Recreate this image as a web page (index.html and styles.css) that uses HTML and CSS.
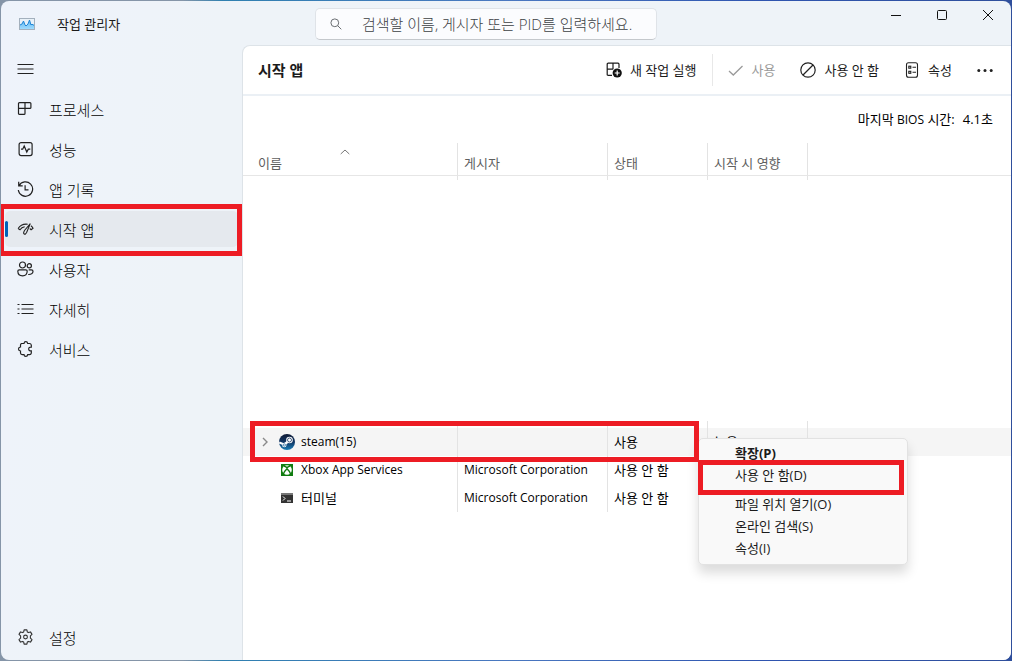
FILE: index.html
```html
<!DOCTYPE html>
<html lang="ko">
<head>
<meta charset="utf-8">
<title>작업 관리자</title>
<link rel="stylesheet" href="styles.css">
</head>
<body>
<div class="window">
  <header class="titlebar">
    <div class="brand">
      <svg class="app-icon" width="16" height="12" viewBox="0 0 16 12"><defs><linearGradient id="g1" x1="0" y1="0" x2="0" y2="1"><stop offset="0" stop-color="#5db4ee"/><stop offset="1" stop-color="#9fdcff"/></linearGradient></defs><rect x=".5" y=".5" width="15" height="11" fill="#e8f1f8" stroke="#a3b0bd"/><path d="M1 11V7l2-1 1.500-3L6 7l1 1 2-2 1.500-4L12 7l1-1 1 1h1v4z" fill="url(#g1)"/><path d="M1 7l2-1 1.500-3L6 7l1 1 2-2 1.500-4L12 7l1-1 1 1h1" fill="none" stroke="#1f86d6"/></svg>
      <h1 class="app-title">작업 관리자</h1>
    </div>
    <label class="search">
      <svg width="12" height="12" viewBox="0 0 12 12" fill="none" stroke="#6b6f73"><circle cx="4.800" cy="4.800" r="3.900"/><path d="M7.600 7.600l3.700 3.700"/></svg>
      <input type="text" aria-label="검색" placeholder="검색할 이름, 게시자 또는 PID를 입력하세요.">
    </label>
    <div class="caption">
      <button type="button" aria-label="최소화"><svg width="12" height="12" viewBox="0 0 12 12" stroke="#111"><path d="M1 6.500h10"/></svg></button>
      <button type="button" aria-label="최대화"><svg width="12" height="12" viewBox="0 0 12 12" fill="none" stroke="#111"><rect x="1.500" y="1.500" width="9" height="9" rx="1"/></svg></button>
      <button type="button" aria-label="닫기"><svg width="12" height="12" viewBox="0 0 12 12" stroke="#111"><path d="M1 1l10 10M11 1L1 11"/></svg></button>
    </div>
  </header>
  <div class="workspace">
    <nav class="sidebar">
      <button type="button" class="nav-item" aria-label="메뉴"><svg width="16" height="16" viewBox="0 0 16 16" stroke="#222"><path d="M0 3.500h16M0 8h16M0 12.500h16"/></svg></button>
      <button type="button" class="nav-item"><svg width="16" height="16" viewBox="0 0 16 16" fill="none" stroke="#222" stroke-width="1.200"><path d="M2 1.600h10.400q1 0 1 1v3.800q0 1-1 1H7.500v5q0 1-1 1H2q-1 0-1-1V2.600q0-1 1-1zM7.500 1.600v5.800H1"/></svg><span>프로세스</span></button>
      <button type="button" class="nav-item"><svg width="16" height="16" viewBox="0 0 16 16" fill="none" stroke="#222" stroke-width="1.200"><rect x="1.600" y="1.600" width="13" height="13" rx="2"/><path d="M3.500 8.200h1.700L6.700 5l2.600 6 1.500-2.800h2"/></svg><span>성능</span></button>
      <button type="button" class="nav-item"><svg width="16" height="16" viewBox="0 0 16 16" fill="none" stroke="#222" stroke-width="1.200"><path d="M1.200.8v4h4M1.600 4.600A7.200 7.200 0 1 1 .8 9M7.600 4.300v4.500h3.400"/></svg><span>앱 기록</span></button>
      <button type="button" class="nav-item selected" aria-current="page"><svg width="16" height="16" viewBox="0 0 16 16" fill="none" stroke="#222" stroke-width="1.100"><path d="M.6 7.500Q3.800 2.400 10.200 3.200M.6 7.500l1.900 1.300q1.600-2.500 4.700-3M13.400 4.700q1.400.9 2.100 2.600l-1.900 1.500-1.300-1.300M12.800 2.600L7 9.500q-1.600 2.800-.3 3.500t2.500-1.700z"/></svg><span>시작 앱</span></button>
      <button type="button" class="nav-item"><svg width="17" height="16" viewBox="0 0 17 16" fill="none" stroke="#222" stroke-width="1.200"><circle cx="5.500" cy="4" r="3"/><circle cx="12.300" cy="4.800" r="2.100"/><path d="M2.300 8.800h6.500q1.400 0 1.400 1.300 0 4.700-4.600 4.700T.8 10.200q0-1.400 1.500-1.400zM11.700 8.800h2.700q1.600 0 1.600 1.500-.2 3.400-4.800 3.200"/></svg><span>사용자</span></button>
      <button type="button" class="nav-item"><svg width="16" height="16" viewBox="0 0 16 16" stroke="#222" stroke-width="1.200"><path d="M0 3.500h2M0 8h2M0 12.500h2M4 3.500h12M4 8h12M4 12.500h12"/></svg><span>자세히</span></button>
      <button type="button" class="nav-item"><svg width="16" height="16" viewBox="0 0 16 16" fill="none" stroke="#222" stroke-width="1.200"><path d="M4 2.500h2.500Q6.700.6 8.300.6t1.900 1.900H12q1.500 0 1.800 1.500v2.200Q11.200 6 11.200 8t2.600 1.900v2.200q-.3 1.500-1.800 1.500h-1.800q-.2 1.800-1.900 1.800t-1.800-1.800H4.600Q3.100 13.500 3 12v-2Q1 9.700 1 8t2-2V4q0-1 1-1.500z"/></svg><span>서비스</span></button>
      <button type="button" class="nav-item settings"><svg width="16" height="16" viewBox="0 0 16 16" fill="none" stroke="#333" stroke-width="1.100"><path d="M6.600.9h2.800l.4 2 1.200.7 2-.7 1.500 2.500-1.600 1.400v2.400l1.600 1.400-1.500 2.500-2-.7-1.200.7-.4 2H6.600l-.4-2-1.200-.7-2 .7-1.500-2.500 1.600-1.400V6.800L1.500 5.400 3 2.900l2 .7 1.200-.7z" stroke-linejoin="round"/><circle cx="8" cy="8" r="1.900"/></svg><span>설정</span></button>
    </nav>
    <main class="panel">
      <div class="toolbar">
        <h2>시작 앱</h2>
        <button type="button"><svg width="16" height="16" viewBox="0 0 16 16" fill="none" stroke="#1b1b1b" stroke-width="1.200"><path d="M6 13.400H2.200q-1 0-1-1V2.200q0-1 1-1H12q1 0 1 1V6M7 1.200v6M1.200 7.200H7"/><circle cx="11.200" cy="11" r="4.600" fill="#111" stroke="none"/><path d="M11.200 8.500v5M8.700 11h5" stroke="#fff"/></svg>새 작업 실행</button>
        <span class="separator"></span>
        <button type="button" disabled><svg width="16" height="16" viewBox="0 0 16 16" fill="none" stroke="#9a9a9a" stroke-width="1.300"><path d="M1 9l4.300 4L14.500 4"/></svg>사용</button>
        <button type="button"><svg width="16" height="16" viewBox="0 0 16 16" fill="none" stroke="#222" stroke-width="1.200"><circle cx="8" cy="8" r="7.200"/><path d="M3 13L13 3"/></svg>사용 안 함</button>
        <button type="button"><svg width="16" height="16" viewBox="0 0 16 16" fill="none" stroke="#222" stroke-width="1.100"><rect x="2.500" y=".8" width="11" height="14.400" rx="2"/><rect x="4.800" y="4.200" width="2" height="2"/><rect x="4.800" y="9.300" width="2" height="2"/><path d="M8.500 5.200H12M8.500 10.300H12"/></svg>속성</button>
        <button type="button" aria-label="더 보기"><svg width="16" height="16" viewBox="0 0 16 16" fill="#222"><circle cx="1.800" cy="8.500" r="1.500"/><circle cx="8" cy="8.500" r="1.500"/><circle cx="14.200" cy="8.500" r="1.500"/></svg></button>
      </div>
      <p class="bios"><span>마지막 <span class="latin">BIOS</span> 시간:</span><span>4.1초</span></p>
      <table class="apps">
        <colgroup><col class="c-name"><col class="c-publisher"><col class="c-status"><col class="c-impact"><col></colgroup>
        <thead>
          <tr>
            <th scope="col">이름<svg class="sort" width="10" height="6" viewBox="0 0 10 6" fill="none" stroke="#777"><path d="M.7 5L5 1l4.300 4"/></svg></th>
            <th scope="col">게시자</th><th scope="col">상태</th><th scope="col">시작 시 영향</th><td></td>
          </tr>
        </thead>
        <tbody>
          <tr class="blank"><td></td><td></td><td></td><td></td><td></td></tr>
          <tr class="active">
            <td><div class="app"><svg class="chevron" width="6" height="10" viewBox="0 0 6 10" fill="none" stroke="#8a8a8a" stroke-width="1.400"><path d="M1 1l4 4-4 4"/></svg><svg width="16" height="16" viewBox="0 0 16 16"><defs><linearGradient id="g2" x1="0" y1="0" x2="0" y2="1"><stop offset="0" stop-color="#101b35"/><stop offset=".5" stop-color="#103563"/><stop offset="1" stop-color="#1a7fb8"/></linearGradient></defs><circle cx="8" cy="8" r="8" fill="url(#g2)"/><path d="M.2 8.500l5 2L8.500 8" fill="none" stroke="#fff" stroke-width="2.200"/><circle cx="10.500" cy="6" r="3.300" fill="#fff"/><circle cx="10.500" cy="6" r="2" fill="#fff" stroke="#15345e" stroke-width=".8"/><circle cx="5.300" cy="11" r="2.200" fill="#fff"/><circle cx="5.300" cy="11" r="1.200" fill="none" stroke="#176299" stroke-width=".7"/></svg><span class="latin">steam(15)</span></div><span class="marker row-marker"></span></td>
            <td></td><td>사용</td><td>높음</td><td></td>
          </tr>
          <tr>
            <td><div class="app"><span class="chevron"></span><svg width="16" height="16" viewBox="0 0 16 16"><rect x="2" y="2" width="12" height="12" fill="#107c10"/><circle cx="8" cy="8" r="4.800" fill="#fff"/><path d="M4.300 12.200Q5.500 9 8 6.800q2.500 2.200 3.700 5.400M4.800 4.100Q6.500 4.500 8 5.700q1.500-1.200 3.200-1.600" fill="none" stroke="#107c10" stroke-width="1.500"/></svg><span class="latin">Xbox App Services</span></div></td>
            <td class="latin">Microsoft Corporation</td><td>사용 안 함</td><td></td><td></td>
          </tr>
          <tr>
            <td><div class="app"><span class="chevron"></span><svg width="16" height="16" viewBox="0 0 16 16"><rect x="2" y="3" width="12" height="10" fill="#333"/><path d="M2 3h12v2H2z" fill="#777"/><path d="M4 6.500l2 2-2 2M8 11h4" fill="none" stroke="#fff"/></svg><span>터미널</span></div></td>
            <td class="latin">Microsoft Corporation</td><td>사용 안 함</td><td></td><td></td>
          </tr>
        </tbody>
      </table>
      <div class="context-menu" role="menu">
        <button type="button" role="menuitem" class="default">확장(P)</button>
        <button type="button" role="menuitem" class="marked">사용 안 함(D)<span class="marker item-marker"></span></button>
        <button type="button" role="menuitem">파일 위치 열기(O)</button>
        <button type="button" role="menuitem">온라인 검색(S)</button>
        <button type="button" role="menuitem">속성(I)</button>
      </div>
    </main>
  </div>
</div>
</body>
</html>
```
FILE: styles.css
```css
* { box-sizing: border-box; }
body {
  margin: 0;
  padding: 1px;
  min-height: 100vh;
  display: flex;
  background: linear-gradient(90deg, #8595a8 0%, #8595a8 18%, #2f80b0 22%, #4a78c0 50%, #2f55b0 75%, #2f4f9c 100%);
  font-family: "Open Sans", "Noto Sans CJK KR", sans-serif;
  font-size: 13px;
  line-height: 20px;
  color: #1b1b1b;
}
h1, h2, p { margin: 0; }
button {
  border: 0;
  padding: 0;
  background: none;
  font: inherit;
  color: inherit;
}
svg { flex: none; }
.window {
  flex: 1;
  min-width: 0;
  display: flex;
  flex-direction: column;
  overflow: hidden;
  border-radius: 8px;
  background: linear-gradient(100deg, #eef3fb 0%, #eef3f8 20%);
}
.titlebar {
  display: flex;
  align-items: flex-start;
  height: 44px;
}
.brand {
  flex: 0 0 314px;
  display: flex;
  align-items: center;
  gap: 22px;
  height: 46px;
  padding-left: 18px;
}
.app-title { font-size: 13px; font-weight: 400; }
.search {
  flex: 0 1 342px;
  display: flex;
  align-items: center;
  gap: 20px;
  height: 32px;
  margin-top: 7px;
  padding: 0 14px;
  border: 1px solid #dfe3e8;
  border-bottom-color: #c4c8cc;
  border-radius: 5px;
  background: #fbfcfe;
}
.search input {
  flex: 1;
  min-width: 0;
  border: 0;
  padding: 0;
  outline: 0;
  background: none;
  font: inherit;
  font-size: 15px;
  font-weight: 300;
}
.search input::placeholder { color: #3c4044; opacity: 1; }
.caption {
  display: flex;
  margin-left: auto;
}
.caption button {
  display: flex;
  align-items: center;
  justify-content: center;
  width: 46px;
  height: 28px;
}
.workspace {
  flex: 1;
  min-width: 0;
  display: flex;
}
.sidebar {
  flex: 0 0 241px;
  display: flex;
  flex-direction: column;
  gap: 4px;
  padding: 6px 4px 5px;
}
.nav-item {
  position: relative;
  display: flex;
  align-items: center;
  gap: 15px;
  height: 36px;
  padding-left: 12px;
  border-radius: 5px;
  font-size: 15px;
  font-weight: 300;
  color: #000;
}
.nav-item svg { width: 17px; }
.nav-item span { padding-top: 1px; }
.settings { margin-top: auto; }
.selected { background: #e5e9ee; }
.selected::before {
  content: "";
  position: absolute;
  left: 0;
  top: 10px;
  width: 3px;
  height: 16px;
  border-radius: 2px;
  background: #0063b8;
}
.selected::after {
  content: "";
  position: absolute;
  z-index: 2;
  inset: -7px -4px -9px -6px;
  border: 5px solid #ed1c24;
}
.panel {
  position: relative;
  flex: 1;
  min-width: 0;
  border-top: 1px solid #dde3e8;
  border-left: 1px solid #dde3e8;
  border-top-left-radius: 8px;
  background: #fff;
}
.toolbar {
  display: flex;
  align-items: center;
  height: 50px;
  padding: 0 5px 0 15px;
  border-bottom: 2px solid #ebf0f5;
}
.toolbar h2 {
  margin-right: auto;
  font-size: 15px;
  font-weight: 700;
}
.toolbar button {
  display: flex;
  align-items: center;
  gap: 8px;
  padding: 0 13px 0 12px;
}
.toolbar button:disabled { color: #9a9a9a; }
.separator {
  width: 1px;
  height: 32px;
  margin: 0 3px 0 2px;
  background: #e8e8e8;
}
.bios {
  display: flex;
  justify-content: flex-end;
  gap: 8px;
  padding: 13px 18px;
  color: #000;
}
.apps {
  width: 100%;
  table-layout: fixed;
  border-collapse: separate;
  border-spacing: 0;
}
.c-name { width: 215px; }
.c-publisher { width: 150px; }
.c-status, .c-impact { width: 100px; }
th, td {
  padding: 0 0 0 6px;
  border-right: 1px solid #e3e3e3;
  text-align: left;
  white-space: nowrap;
}
th:first-child { padding-left: 15px; }
td:last-child { border-right: 0; }
thead th, thead td {
  position: relative;
  height: 33px;
  padding-bottom: 2px;
  border-bottom: 1px solid #e6e6e6;
  vertical-align: bottom;
  font-weight: 400;
  color: #5f5f5f;
}
.sort {
  position: absolute;
  left: 97px;
  top: 6px;
}
tbody td {
  height: 28px;
  color: #000;
}
.latin, tbody .latin { font-size: 12px; }
tbody td:first-child { position: relative; }
.blank td {
  height: 252px;
  border-image: linear-gradient(#e3e3e3 5px, transparent 5px, transparent 244px, #e3e3e3 244px) 1;
}
.active td { background: #f5f5f5; }
.app {
  display: flex;
  align-items: center;
  gap: 6px;
  padding-left: 13px;
}
.chevron {
  flex: none;
  width: 6px;
  margin-right: 5px;
}
.marker {
  position: absolute;
  border: 5px solid #ed1c24;
  pointer-events: none;
}
.row-marker {
  left: 7px;
  top: -7px;
  z-index: 2;
  width: 449px;
  height: 41px;
}
.context-menu {
  position: absolute;
  left: 455px;
  top: 392px;
  z-index: 1;
  display: flex;
  flex-direction: column;
  width: 210px;
  padding: 3px 0 5px;
  border: 1px solid #e2e2e2;
  border-radius: 5px;
  background: #f9f9f9;
  box-shadow: 0 8px 12px rgba(0, 0, 0, .14);
}
.context-menu button {
  position: relative;
  height: 22px;
  padding-left: 36px;
  text-align: left;
}
.context-menu .default { font-weight: 700; }
.context-menu .marked { margin-bottom: 7px; }
.item-marker {
  left: -1px;
  top: -4px;
  width: 206px;
  height: 35px;
}
```
